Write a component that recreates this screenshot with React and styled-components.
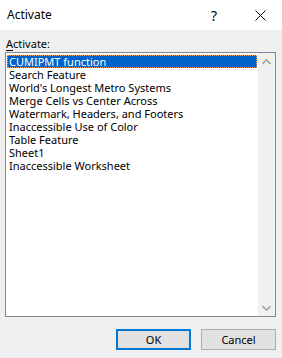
import React from "react";
import styled, { createGlobalStyle } from "styled-components";

const GlobalStyle = createGlobalStyle`
  html, body {
    margin: 0;
    padding: 0;
    background: #f0f0f0;
  }
  body {
    font-family: "Segoe UI", "Noto Sans", "Open Sans", sans-serif;
    font-size: 11px;
    color: #000;
  }
`;

const sheets = [
  "CUMIPMT function",
  "Search Feature",
  "World's Longest Metro Systems",
  "Merge Cells vs Center Across",
  "Watermark, Headers, and Footers",
  "Inaccessible Use of Color",
  "Table Feature",
  "Sheet1",
  "Inaccessible Worksheet",
];

const App = () => {
  return (
    <>
      <GlobalStyle />
      <Dialog>
        <TitleBar>
          <Title>Activate</Title>
          <TitleButtons>
            <Help>?</Help>
            <Close>
              <svg width="11" height="11" viewBox="0 0 11 11">
                <path d="M0.5 0.5 L10.5 10.5 M10.5 0.5 L0.5 10.5" stroke="#000" strokeWidth="1" />
              </svg>
            </Close>
          </TitleButtons>
        </TitleBar>
        <Body>
          <Label>
            <u>A</u>ctivate:
          </Label>
          <ListBox>
            <Items>
              {sheets.map((name, i) => (
                <Item key={name} $selected={i === 0}>
                  {name}
                </Item>
              ))}
            </Items>
            <ScrollBar>
              <Arrow>
                <svg width="9" height="6" viewBox="0 0 9 6">
                  <path d="M0.5 5 L4.5 1 L8.5 5" fill="none" stroke="#a3a3a3" strokeWidth="1.6" />
                </svg>
              </Arrow>
              <Arrow>
                <svg width="9" height="6" viewBox="0 0 9 6">
                  <path d="M0.5 1 L4.5 5 L8.5 1" fill="none" stroke="#a3a3a3" strokeWidth="1.6" />
                </svg>
              </Arrow>
            </ScrollBar>
          </ListBox>
          <Buttons>
            <Button $primary>OK</Button>
            <Button>Cancel</Button>
          </Buttons>
        </Body>
      </Dialog>
    </>
  );
};

const Dialog = styled.div`
  width: 282px;
  height: 358px;
  display: flex;
  flex-direction: column;
  background: #f0f0f0;
`;

const TitleBar = styled.div`
  height: 30px;
  background: #fff;
  display: flex;
  align-items: center;
  justify-content: space-between;
  padding-left: 7px;
  box-sizing: border-box;
`;

const Title = styled.div`
  font-size: 12px;
  margin-top: -1px;
`;

const TitleButtons = styled.div`
  display: flex;
  align-items: center;
`;

const Help = styled.div`
  width: 46px;
  text-align: center;
  font-size: 14px;
`;

const Close = styled.div`
  width: 46px;
  display: flex;
  justify-content: center;
  align-items: center;
  margin-right: -1px;
`;

const Body = styled.div`
  flex: 1;
  display: flex;
  flex-direction: column;
  padding: 5px 6px 0 5px;
`;

const Label = styled.div`
  height: 17px;
  line-height: 17px;
  padding-left: 1px;
  u {
    text-decoration-thickness: 1px;
    text-underline-offset: 2px;
  }
`;

const ListBox = styled.div`
  height: 265px;
  border: 1px solid #828790;
  background: #fff;
  display: flex;
  box-sizing: border-box;
`;

const Items = styled.div`
  flex: 1;
  padding: 2px 1px 0 1px;
`;

const Item = styled.div`
  height: 13px;
  line-height: 13px;
  padding-left: 2px;
  white-space: nowrap;
  box-sizing: border-box;
  background: ${(p) => (p.$selected ? "#0063cc" : "transparent")};
  color: ${(p) => (p.$selected ? "#fff" : "#000")};
  outline: ${(p) => (p.$selected ? "1px dotted #f5a05a" : "none")};
  outline-offset: -1px;
`;

const ScrollBar = styled.div`
  width: 17px;
  background: #f0f0f0;
  display: flex;
  flex-direction: column;
  justify-content: space-between;
`;

const Arrow = styled.div`
  height: 17px;
  display: flex;
  align-items: center;
  justify-content: center;
`;

const Buttons = styled.div`
  display: flex;
  justify-content: flex-end;
  gap: 10px;
  margin-top: 12px;
`;

const Button = styled.div`
  width: 75px;
  height: 21px;
  box-sizing: border-box;
  display: flex;
  align-items: center;
  justify-content: center;
  background: #e1e1e1;
  border: ${(p) => (p.$primary ? "2px solid #0078d7" : "1px solid #adadad")};
  font-size: 11px;
`;

export default App;
